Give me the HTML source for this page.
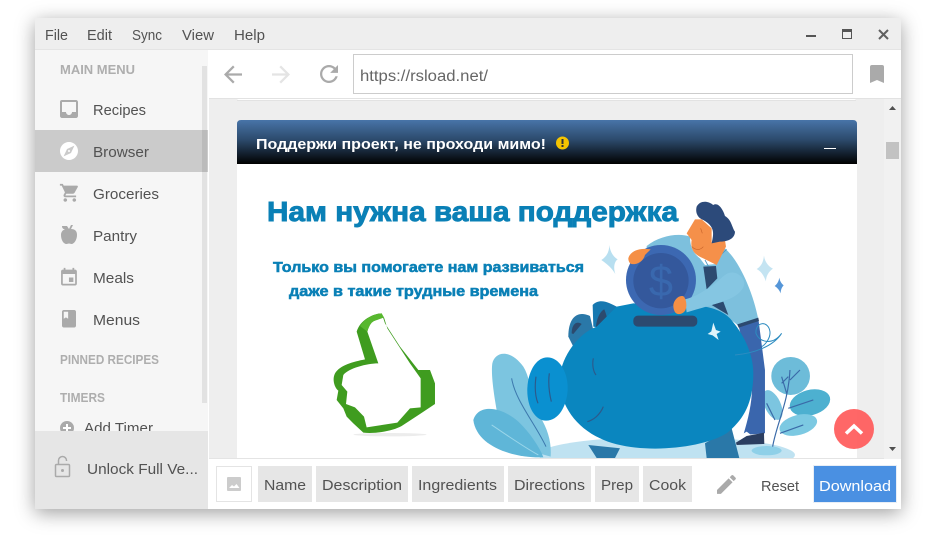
<!DOCTYPE html>
<html lang="ru">
<head>
<meta charset="utf-8">
<title>Browser</title>
<style>
html,body{margin:0;padding:0;width:935px;height:538px;overflow:hidden;background:#fff}
#win{position:absolute;left:35px;top:18px;width:866px;height:491px;box-shadow:0 4px 18px rgba(0,0,0,.38)}
svg{position:absolute;left:0;top:0}
text{font-family:"Liberation Sans","Noto Sans CJK SC",sans-serif}
.m{font-size:15px;fill:#525252}
.h{font-size:12.5px;font-weight:bold;fill:#aeaeae}
.i{fill:#aaa}
.b{font-weight:bold;fill:#0a80b6;stroke:#0a80b6}
</style>
</head>
<body>
<div id="win"></div>
<svg width="935" height="538" viewBox="0 0 935 538" xmlns="http://www.w3.org/2000/svg">
<defs><clipPath id="pg"><rect x="237" y="164" width="620" height="294"/></clipPath></defs>
<!-- content bg -->
<rect x="209" y="50" width="692" height="459" fill="#eee"/>
<rect x="884" y="98" width="17" height="361" fill="#f1f1f1"/>
<rect x="237" y="96" width="619" height="4" rx="2" fill="#fff"/>
<rect x="237" y="100" width="619" height="1" fill="#e2e2e2"/>
<!-- panel -->
<linearGradient id="g" x1="0" y1="0" x2="0" y2="1"><stop offset="0" stop-color="#4874a8"/><stop offset=".45" stop-color="#2c4a6c"/><stop offset="1" stop-color="#000"/></linearGradient>
<path d="M237 164V124q0-4 4-4H853q4 0 4 4V164Z" fill="url(#g)"/>
<rect x="237" y="164" width="620" height="294" fill="#fff"/>
<text x="256" y="149" font-size="14.5" font-weight="bold" fill="#fff" textLength="290" lengthAdjust="spacingAndGlyphs">Поддержи проект, не проходи мимо!</text>
<circle cx="562.500" cy="143" r="6.500" fill="#f5c400"/>
<rect x="561.500" y="139" width="2" height="5" fill="#333"/><rect x="561.500" y="145" width="2" height="2" fill="#333"/>
<rect x="824" y="148" width="12" height="1" fill="#fff"/>
<!-- scrollbar -->
<rect x="886" y="142" width="13" height="17" fill="#c2c2c2"/>
<path d="M889 110l3.500-4 3.500 4Z" fill="#505050"/>
<path d="M889 447l3.500 4 3.500-4Z" fill="#505050"/>

<!-- page image -->
<g clip-path="url(#pg)">
<text class="b" x="267" y="221" font-size="28" stroke-width=".9" textLength="411" lengthAdjust="spacingAndGlyphs">Нам нужна ваша поддержка</text>
<text class="b" x="273" y="272" font-size="15" stroke-width=".55" textLength="311" lengthAdjust="spacingAndGlyphs">Только вы помогаете нам развиваться</text>
<text class="b" x="289" y="296" font-size="15" stroke-width=".55" textLength="249" lengthAdjust="spacingAndGlyphs">даже в такие трудные времена</text>

<!-- thumb -->
<g transform="translate(310 300) scale(.3333)">
<ellipse cx="240" cy="404" rx="110" ry="5" fill="#ececec"/>
<path fill="#3f9c1f" fill-rule="evenodd" d="M215 40C190 40 150 60 140 95L165 178C130 185 90 195 75 220C65 240 75 265 85 272L80 300L100 325L110 350L130 370L160 398C200 402 250 392 275 378L330 342L375 312L375 250L360 210L325 210L270 140L225 70ZM195 62L222 52L232 85L300 190L332 235L332 322L300 325L262 368L170 382L162 350L135 322L108 312L112 275L95 255L100 225C115 205 170 190 205 190L172 95C178 75 185 65 195 62Z"/>
<path fill="#58b82f" d="M150 78C165 55 190 42 215 40L222 52L195 62C185 65 178 75 172 95Z"/>
</g>

<!-- illustration -->
<g transform="translate(460 190) scale(.3333)">
<ellipse cx="620" cy="795" rx="385" ry="55" fill="#bfe2f1"/>
<ellipse cx="920" cy="782" rx="45" ry="14" fill="#8fd0e8"/>
<path fill="#7cc5e0" d="M97 520C105 485 150 475 190 530C215 570 215 640 240 680C265 720 275 760 272 800L130 760C115 690 90 570 97 520Z"/>
<path fill="none" stroke="#3c78ad" stroke-width="3" d="M155 565C165 630 225 700 258 770"/>
<path fill="#5fb6d8" d="M40 690C55 640 125 650 175 695C212 730 240 775 250 802C160 805 50 770 40 690Z"/>
<path fill="none" stroke="#9ad6ea" stroke-width="3" d="M95 705C140 735 190 770 235 795"/>
<!-- right plant -->
<ellipse cx="938" cy="645" rx="24" ry="48" transform="rotate(-25 938 645)" fill="#7cc5e0"/>
<ellipse cx="992" cy="558" rx="58" ry="57" fill="#6dbcd9"/>
<ellipse cx="1050" cy="638" rx="62" ry="38" transform="rotate(-15 1050 638)" fill="#4db0d0"/>
<ellipse cx="1015" cy="705" rx="58" ry="30" transform="rotate(-15 1015 705)" fill="#7cc9e2"/>
<path fill="none" stroke="#3a6aa8" stroke-width="3.500" d="M938 770C950 700 985 640 990 540M965 580L985 560M980 610L965 560M985 655L1060 630M960 730L1030 705M945 690L920 640M990 570L1020 540"/>
<!-- legs of man -->
<path fill="#3a66ad" d="M835 405L895 385L915 540L915 730L850 735C870 670 885 600 870 540Z"/>
<path fill="#fff" d="M835 740L860 725L880 740L850 755Z"/>
<path fill="#2c3e60" d="M828 758L860 738L912 728L913 762L830 765Z"/>
<!-- man torso -->
<path fill="#7dc0dd" d="M560 168C600 135 660 128 690 140C690 170 700 190 720 205L735 225L770 222L795 175C840 215 880 310 895 388L835 408C810 380 760 370 700 365L560 300Z"/>
<path fill="#2c4a70" d="M730 230L768 228L772 265L740 298ZM755 345L790 335L805 375Z"/>
<path fill="none" stroke="#4a94c0" stroke-width="2.500" d="M772 205L800 178M735 210L745 228"/>
<path fill="#2c4a70" d="M832 403L895 383L897 393L836 413Z"/>
<!-- head -->
<path fill="#f5904a" d="M680 130L705 88L725 88L755 115L755 158L795 150L798 170L770 225L730 205C705 195 690 180 695 150Z"/>
<path fill="none" stroke="#c9642a" stroke-width="2" d="M696 170C705 180 720 182 730 170M722 115L727 130"/>
<path fill="#2c4a7a" d="M710 50C720 30 745 32 760 45C775 35 790 60 795 78C815 90 815 110 825 125C825 145 805 155 780 155L755 160C762 130 765 110 730 90C715 85 705 70 710 50Z"/>
<!-- pig -->
<path fill="#2a78a8" d="M325 440C325 385 350 360 390 378L400 420L340 470Z"/>
<path fill="#2c4a6e" d="M335 430C335 405 348 390 365 402L340 432Z"/>
<path fill="#1778b0" d="M398 345C420 322 450 340 470 350L450 420L400 410Z"/>
<path fill="#2c4a6e" d="M408 410C410 380 425 360 433 358C440 375 445 395 442 410Z"/>
<path fill="#2a78a8" d="M385 765L480 775L465 804H410ZM735 760L815 715L838 804H740Z"/>
<path fill="#0a86bf" d="M300 560C305 500 355 430 410 410L470 350L520 340L700 345C750 350 785 360 810 385C850 430 880 490 880 550C880 640 850 690 800 730C720 780 520 795 420 745C345 710 295 640 300 560Z"/>
<path fill="#0a90d0" d="M262 502C300 502 325 550 323 600C320 650 295 692 258 692C225 692 200 650 202 595C204 545 228 502 262 502Z"/>
<path fill="none" stroke="#2c5a8c" stroke-width="3.500" d="M228 560C224 590 226 620 234 640M268 550C264 580 268 610 274 635M400 505C396 525 400 545 408 555M430 650C420 675 400 690 382 695"/>
<!-- coin -->
<circle cx="603" cy="270" r="105" fill="#3c68b2"/>
<circle cx="603" cy="272" r="83" fill="#34589c"/>
<text x="603" y="318" text-anchor="middle" font-size="130" fill="#3968ae">$</text>
<rect x="520" y="377" width="192" height="33" rx="14" fill="#2c4a70"/>
<!-- arm -->
<path fill="#85c6e2" d="M675 328C710 320 735 300 760 285C790 262 800 240 830 250C870 270 855 310 800 330C760 345 720 355 680 367Z"/>
<path fill="#f58f45" d="M505 205C510 185 535 172 572 178L555 195C550 215 530 225 515 222C508 220 505 212 505 205Z"/>
<path fill="#f58f45" d="M640 345C642 328 660 312 672 320C682 335 682 360 670 368C655 378 640 372 640 345Z"/>
<path fill="#dff3fa" d="M760 398L768 420L782 425L770 432L776 450L758 436L743 432L754 424Z"/>
<path fill="none" stroke="#2d8cc0" stroke-width="3" d="M825 495C880 490 940 470 965 430C940 465 900 460 888 430C885 395 925 390 930 425C932 445 915 465 905 470"/>
<!-- sparkles -->
<path fill="#b8dff0" d="M448 165C452 195 468 205 473 208C462 215 460 235 466 252C456 235 445 225 424 210C440 200 448 185 448 165Z"/>
<path fill="#c4e4f2" d="M912 197C915 220 930 232 939 236C925 245 918 260 918 274C912 258 905 245 890 237C905 228 910 215 912 197Z"/>
<path fill="#5596d8" d="M958 263C960 275 966 282 971 286C965 292 962 300 962 310C958 300 953 294 944 288C952 282 956 275 958 263Z"/>
</g>
</g>

<!-- red button -->
<circle cx="854" cy="429" r="20" fill="#ff5a5a" opacity=".92"/>
<path d="M846 433.500L854 426L862 433.500" fill="none" stroke="#fff" stroke-width="3.500"/>

<!-- title bar -->
<rect x="35" y="18" width="866" height="32" fill="#eee"/>
<rect x="35" y="49" width="866" height="1" fill="#e4e4e4"/>
<text class="m" x="45" y="40" textLength="23" lengthAdjust="spacingAndGlyphs">File</text>
<text class="m" x="87" y="40" textLength="25" lengthAdjust="spacingAndGlyphs">Edit</text>
<text class="m" x="132" y="40" textLength="30" lengthAdjust="spacingAndGlyphs">Sync</text>
<text class="m" x="182" y="40" textLength="32" lengthAdjust="spacingAndGlyphs">View</text>
<text class="m" x="234" y="40" textLength="31" lengthAdjust="spacingAndGlyphs">Help</text>
<rect x="806" y="35" width="10" height="2" fill="#555"/>
<path d="M842.500 29.500h9v9h-9Z" fill="none" stroke="#555"/><rect x="842" y="29" width="10" height="3" fill="#555"/>
<path d="M879 30l9 9M888 30l-9 9" stroke="#606060" stroke-width="2" fill="none"/>

<!-- toolbar -->
<rect x="209" y="50" width="692" height="48" fill="#fff"/>
<rect x="209" y="98" width="692" height="1" fill="#e2e2e2"/>
<path transform="translate(219.500 61) scale(1.125)" fill="#aaa" d="M20 11H7.830l5.590-5.590L12 4l-8 8 8 8 1.410-1.410L7.830 13H20v-2z"/>
<path transform="translate(267.500 61) scale(1.125)" fill="#e4e4e4" d="M12 4l-1.410 1.410L16.170 11H4v2h12.170l-5.580 5.590L12 20l8-8z"/>
<path transform="translate(315.500 60.500) scale(1.125)" fill="#aaa" d="M17.650 6.350C16.200 4.900 14.210 4 12 4c-4.420 0-7.990 3.580-7.990 8s3.570 8 7.990 8c3.730 0 6.840-2.550 7.730-6h-2.080c-.82 2.330-3.040 4-5.650 4-3.310 0-6-2.690-6-6s2.690-6 6-6c1.660 0 3.140.69 4.220 1.780L13 11h7V4l-2.350 2.350z"/>
<rect x="353.500" y="54.500" width="499" height="39" fill="#fff" stroke="#ccc"/>
<text x="360" y="81" font-size="15.500" fill="#666" textLength="128" lengthAdjust="spacingAndGlyphs">https://rsload.net/</text>
<path d="M872 65h10q2 0 2 2v16l-7-3-7 3V67q0-2 2-2Z" fill="#aaa"/>

<!-- sidebar -->
<rect x="35" y="50" width="173" height="459" fill="#f6f6f6"/>
<rect x="35" y="130" width="173" height="42" fill="#cbcbcb"/>
<rect x="202" y="66" width="5" height="337" fill="#000" opacity=".08"/>
<text class="h" x="60" y="74" textLength="75" lengthAdjust="spacingAndGlyphs">MAIN MENU</text>
<path class="i" transform="translate(57 97)" d="M19 3H5a2 2 0 0 0-2 2v14c0 1.100.89 2 2 2h14c1.100 0 2-.9 2-2V5c0-1.100-.9-2-2-2zm0 12h-4c0 1.660-1.350 3-3 3s-3-1.340-3-3H5V5h14v10z"/>
<text class="m" x="93" y="115" textLength="53" lengthAdjust="spacingAndGlyphs">Recipes</text>
<path fill="#fff" transform="translate(58.200 140.200) scale(.9)" d="M12 10.900c-.61 0-1.100.49-1.100 1.100s.49 1.100 1.100 1.100c.61 0 1.100-.49 1.100-1.100s-.49-1.100-1.100-1.100zM12 2C6.480 2 2 6.480 2 12s4.480 10 10 10 10-4.480 10-10S17.520 2 12 2zm2.190 12.190L6 18l3.810-8.190L18 6l-3.810 8.190z"/>
<text class="m" x="93" y="157" textLength="56" lengthAdjust="spacingAndGlyphs">Browser</text>
<path class="i" transform="translate(59 182) scale(.9)" d="M7 18c-1.100 0-1.990.9-1.990 2S5.900 22 7 22s2-.9 2-2-.9-2-2-2zM1 2v2h2l3.600 7.590-1.350 2.450c-.16.28-.25.61-.25.96 0 1.100.9 2 2 2h12v-2H7.420c-.14 0-.25-.11-.25-.25l.03-.12.9-1.630h7.450c.75 0 1.410-.41 1.750-1.030l3.580-6.470c.08-.14.12-.31.12-.48 0-.55-.45-1-1-1H5.210l-.94-2H1zm16 16c-1.100 0-1.990.9-1.990 2s.89 2 1.990 2 2-.9 2-2-.9-2-2-2z"/>
<text class="m" x="93" y="199" textLength="66" lengthAdjust="spacingAndGlyphs">Groceries</text>
<path class="i" d="M62 226h5l2 3 2-4h2l-2 4c4 0 6 2 6 6 0 5-3 9-5.500 9-1 0-1.500-.5-2.500-.5s-1.500.5-2.500.5C63.500 244 61 240 61 235c0-3 1.500-5 4-5.500C63 229 62 228 62 226Z"/>
<text class="m" x="93" y="241" textLength="44" lengthAdjust="spacingAndGlyphs">Pantry</text>
<path class="i" transform="translate(58.400 267) scale(.88)" d="M17 12h-5v5h5v-5zM16 1v2H8V1H6v2H5c-1.110 0-1.990.9-1.990 2L3 19c0 1.100.89 2 2 2h14c1.100 0 2-.9 2-2V5c0-1.100-.9-2-2-2h-1V1h-2zm3 18H5V8h14v11z"/>
<text class="m" x="93" y="283" textLength="41" lengthAdjust="spacingAndGlyphs">Meals</text>
<path class="i" transform="translate(58.500 308.200) scale(.875)" d="M18 2H6c-1.100 0-2 .9-2 2v16c0 1.100.9 2 2 2h12c1.100 0 2-.9 2-2V4c0-1.100-.9-2-2-2zM6 4h5v8l-2.500-1.500L6 12V4z"/>
<text class="m" x="93" y="325" textLength="47" lengthAdjust="spacingAndGlyphs">Menus</text>
<text class="h" x="60" y="364" textLength="99" lengthAdjust="spacingAndGlyphs">PINNED RECIPES</text>
<text class="h" x="60" y="402" textLength="45" lengthAdjust="spacingAndGlyphs">TIMERS</text>
<circle cx="67" cy="428" r="7" fill="#aaa"/><path d="M63 428h8M67 424v8" stroke="#fff" stroke-width="2"/>
<text class="m" x="84" y="433" textLength="69" lengthAdjust="spacingAndGlyphs">Add Timer</text>
<rect x="35" y="431" width="173" height="78" fill="#e6e6e6"/>
<rect x="55.500" y="464.500" width="14" height="12" rx="1" fill="none" stroke="#aaa" stroke-width="1.500"/>
<path d="M58.500 464v-3.500a4 4 0 0 1 8 0v.5" fill="none" stroke="#aaa" stroke-width="1.500"/>
<circle cx="62.500" cy="470.500" r="1.500" fill="#aaa"/>
<text class="m" x="87" y="474" textLength="111" lengthAdjust="spacingAndGlyphs">Unlock Full Ve...</text>

<!-- bottom bar -->
<rect x="209" y="459" width="692" height="50" fill="#fff"/>
<rect x="209" y="458" width="675" height="1" fill="#e4e4e4"/>
<rect x="216.500" y="466.500" width="35" height="35" fill="#fff" stroke="#e4e4e4"/>
<rect x="227" y="477" width="14" height="14" rx="1" fill="#ccc"/>
<path d="M229 488l3-3 2 1.500 2.500-2.500 3 4Z" fill="#fff"/>
<rect x="258" y="466" width="54" height="36" fill="#e6e6e6"/>
<rect x="316" y="466" width="92" height="36" fill="#e6e6e6"/>
<rect x="412" y="466" width="92" height="36" fill="#e6e6e6"/>
<rect x="508" y="466" width="83" height="36" fill="#e6e6e6"/>
<rect x="595" y="466" width="44" height="36" fill="#e6e6e6"/>
<rect x="643" y="466" width="49" height="36" fill="#e6e6e6"/>
<text class="m" x="264" y="490" textLength="42" lengthAdjust="spacingAndGlyphs">Name</text>
<text class="m" x="322" y="490" textLength="80" lengthAdjust="spacingAndGlyphs">Description</text>
<text class="m" x="418" y="490" textLength="79" lengthAdjust="spacingAndGlyphs">Ingredients</text>
<text class="m" x="514" y="490" textLength="71" lengthAdjust="spacingAndGlyphs">Directions</text>
<text class="m" x="601" y="490" textLength="32" lengthAdjust="spacingAndGlyphs">Prep</text>
<text class="m" x="649" y="490" textLength="37" lengthAdjust="spacingAndGlyphs">Cook</text>
<path class="i" transform="translate(713.850 471.850) scale(1.05)" d="M3 17.250V21h3.750L17.810 9.940l-3.750-3.750L3 17.250zM20.710 7.040c.39-.39.39-1.020 0-1.410l-2.340-2.340c-.39-.39-1.020-.39-1.410 0l-1.830 1.830 3.750 3.750 1.830-1.830z"/>
<text class="m" x="761" y="491" textLength="38" lengthAdjust="spacingAndGlyphs">Reset</text>
<rect x="813.500" y="465.500" width="83" height="37" fill="#4a90e2" stroke="#e8eef6"/>
<text x="819" y="491" font-size="15" fill="#fff" textLength="72" lengthAdjust="spacingAndGlyphs">Download</text>
</svg>
</body>
</html>
